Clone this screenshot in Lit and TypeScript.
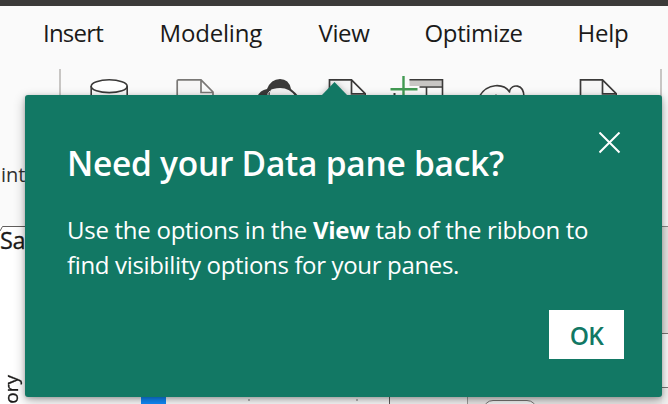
import { LitElement, html, css, svg } from "lit";
import { customElement, property } from "lit/decorators.js";

const icons: Record<string, unknown> = {
  database: svg`<g fill="none" stroke="#3b3a39" stroke-width="1.6"><ellipse cx="19.2" cy="17.200" rx="18" ry="6.4" fill="#fff"/><path d="M1.2 17v30M37.2 17v30"/></g>`,
  page: svg`<path d="M1.200 45V12a1.2 1.2 0 0 1 1.2-1.2H25L37 23v22M25 11v12.500H37" fill="#f6f6f6" stroke="#7a7876" stroke-width="1.700"/>`,
  sheet: svg`<path d="M1.500 45V10.800H23.500L37.500 25V45M23.500 11v13.800H37" fill="#f6f6f6" stroke="#3b3a39" stroke-width="1.700"/>`,
  brain: svg`<path d="M0 28Q3 21 10 20Q14 10 23 10Q32 10 34 20Q38 23 42 28Z" fill="#3b3a39"/><path d="M13 28Q12 20 16 20Q31 16 39 28Z" fill="#f2f2f2"/><path d="M11 28q-1-4 2-6" stroke="#eee" fill="none"/>`,
  table: svg`<path d="M19.500 10h33v7H19.500z" fill="#c8c6c4"/><path d="M19.500 10.800H52.500V45M29.500 18H52M36.500 18v27" fill="none" stroke="#3b3a39" stroke-width="1.600"/><path d="M4.500 24v6" stroke="#3b3a39" stroke-width="2"/><path d="M0.500 20.200H27.500M13.500 7v25" stroke="#429a53" stroke-width="2.400"/>`,
  cloud: svg`<path d="M0 28C8 13.500 25 14 31 23.500M30.500 22C32.500 14.500 45 14.500 45 28" fill="none" stroke="#3b3a39" stroke-width="1.600"/><path d="M14 27q3-2 6 0" fill="none" stroke="#3b3a39"/>`,
};

@customElement("ribbon-icon")
export class RibbonIcon extends LitElement {
  @property() name = "";
  @property({ type: Number }) width = 38;
  static styles = css`
    :host { display: block; }
    svg { display: block; overflow: hidden; }
  `;
  render() {
    return html`<svg width=${this.width} height="44" viewBox="0 0 ${this.width} 44">${icons[this.name]}</svg>`;
  }
}

@customElement("teaching-callout")
export class TeachingCallout extends LitElement {
  static styles = css`
    :host {
      display: block;
      box-sizing: border-box;
      background: #127864;
      color: #fff;
      border-radius: 3px;
      box-shadow: 0 4px 12px rgba(0, 0, 0, 0.3), 0 1px 4px rgba(0, 0, 0, 0.2);
      padding: 37px 38px 38px 42px;
    }
    .beak {
      position: absolute;
      left: 296px;
      top: -13px;
      filter: drop-shadow(0 0 3px rgba(0, 0, 0, 0.25));
      clip-path: inset(-8px -8px 0 -8px);
    }
    .head { display: flex; justify-content: space-between; height: 76px; }
    h1 {
      margin: 8px 0 0;
      font-size: 33.500px;
      line-height: 46px;
      font-weight: 600;
      letter-spacing: -0.260px;
      white-space: nowrap;
    }
    .close { width: 22px; height: 22px; margin-right: 3px; }
    p { margin: 5px 0 0; font-size: 24px; line-height: 34.500px; white-space: nowrap; }
    .l1 { letter-spacing: -0.270px; }
    .l2 { letter-spacing: -0.340px; }
    .foot { display: flex; justify-content: flex-end; margin-top: 28px; }
    button {
      width: 75px;
      height: 49px;
      padding: 1px 0 0;
      border: 0;
      background: #fff;
      color: #127864;
      font: 600 24.500px "Open Sans", sans-serif;
      letter-spacing: -0.700px;
    }
  `;
  render() {
    return html`
      <svg class="beak" width="28" height="14"><path d="M0 14L13.500 0L27 14Z" fill="#127864" /></svg>
      <div class="head">
        <h1>Need your Data pane back?</h1>
        <svg class="close" viewBox="0 0 22 22">
          <path d="M0.500 0.500L20.500 20.500M20.500 0.500L0.500 20.500" stroke="#fff" stroke-width="2" />
        </svg>
      </div>
      <p>
        <span class="l1">Use the options in the <b>View</b> tab of the ribbon to</span><br />
        <span class="l2">find visibility options for your panes.</span>
      </p>
      <div class="foot"><button>OK</button></div>
    `;
  }
}

@customElement("app-root")
export class AppRoot extends LitElement {
  static styles = css`
    :host {
      display: block;
      position: relative;
      width: 668px;
      height: 404px;
      overflow: hidden;
      background: #fff;
      color: #1b1a19;
      font-family: "Open Sans", "Noto Sans", sans-serif;
    }
    .title { height: 6px; background: #3b3a39; }
    .tabs { height: 63px; background: #fafafa; display: grid; grid-template-columns: 116.500px 159px 106px 153px 1fr; padding-left: 43px; box-sizing: border-box; }
    .tabs span { font-size: 24px; line-height: 54px; white-space: nowrap; }
    .insert { letter-spacing: -0.800px; }
    .modeling { letter-spacing: -0.180px; }
    .view { letter-spacing: -0.400px; }
    .optimize { letter-spacing: -0.350px; }
    .help { letter-spacing: -0.250px; }
    .ribbon { height: 157px; background: #fafafa; }
    .icons { display: grid; grid-template-columns: 31px 86px 81px 71px 61.500px 89.500px 99.500px 81.500px 2px; padding-left: 59px; height: 94px; }
    .rule { width: 2px; background: #c8c6c4; }
    .group { font-size: 20px; line-height: 24px; padding-left: 1px; color: #323130; }
    .work { display: grid; grid-template-columns: 390px 77px 195px 1fr; height: 178px; }
    .canvas { position: relative; border-right: 1px solid #605e5c; background: #fff; }
    .edge { display: block; height: 5px; }
    .sa { font-size: 23.500px; line-height: 27px; letter-spacing: -0.500px; margin-top: -4px; -webkit-text-stroke: 0.3px #1b1a19; }
    .ory { position: absolute; left: 0; top: 149px; writing-mode: vertical-rl; transform: rotate(180deg); font-size: 19px; line-height: 22px; -webkit-text-stroke: 0.3px #1b1a19; }
    .bar { position: absolute; left: 141px; top: 160px; width: 25px; height: 20px; background: #118dff; }
    .dot { position: absolute; top: 173px; width: 2px; height: 2px; background: #bbb; }
    .d1 { left: 248px; }
    .d2 { left: 356px; }
    .mid { background: #f8f8f8; }
    .pane { background: #eeedec; border-left: 1px solid #a19f9d; overflow: hidden; display: flex; align-items: flex-end; }
    .pill { box-sizing: border-box; width: 54px; height: 20px; margin: 0 0 -16px 15px; border: 1px solid #797775; border-radius: 10px; background: #fafafa; }
    .side { display: grid; grid-template-rows: 107px 54px 1fr; }
    .side div { border-top: 1px solid #8a8886; background: #e6e4e2; }
    .side div + div { background: #fafafa; border-color: #797775; }
    .side div + div + div { background: #f3f2f1; }
    teaching-callout { position: absolute; left: 25px; top: 95px; width: 637px; height: 302px; }
  `;
  render() {
    return html`
      <div class="title"></div>
      <div class="tabs">
        <span class="insert">Insert</span><span class="modeling">Modeling</span><span class="view">View</span
        ><span class="optimize">Optimize</span><span class="help">Help</span>
      </div>
      <div class="ribbon">
        <div class="icons">
          <div class="rule"></div>
          <ribbon-icon name="database" width="40"></ribbon-icon>
          <ribbon-icon name="page"></ribbon-icon>
          <ribbon-icon name="brain" width="46"></ribbon-icon>
          <ribbon-icon name="sheet"></ribbon-icon>
          <ribbon-icon name="table" width="54"></ribbon-icon>
          <ribbon-icon name="cloud" width="46"></ribbon-icon>
          <ribbon-icon name="sheet"></ribbon-icon>
          <div class="rule"></div>
        </div>
        <div class="group">inter</div>
      </div>
      <div class="work">
        <div class="canvas">
          <svg class="edge" width="389" height="5"><path d="M0 5L2.500 0.500H389" fill="none" stroke="#605e5c" /></svg>
          <div class="sa">Sales</div>
          <div class="ory">ory</div>
          <div class="bar"></div>
          <div class="dot d1"></div>
          <div class="dot d2"></div>
        </div>
        <div class="mid"></div>
        <div class="pane"><div class="pill"></div></div>
        <div class="side"><div></div><div></div><div></div></div>
      </div>
      <teaching-callout></teaching-callout>
    `;
  }
}
